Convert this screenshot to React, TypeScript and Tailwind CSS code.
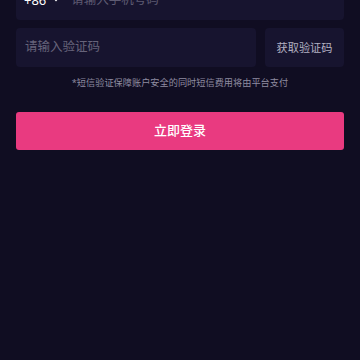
import React from "react";

export default function App() {
  return (
    <div
      className="w-[360px] h-[360px] overflow-hidden bg-[#100d22]"
      style={{ fontFamily: '"Noto Sans", "Noto Sans CJK SC", sans-serif' }}
    >
      <div className="-mt-[20px] px-4 flex flex-col">
        <div className="h-[40px] rounded bg-[#17142f] flex items-center pl-[8px]">
          <span className="text-white text-[13px] leading-none">+86</span>
          <svg width="8" height="6" viewBox="0 0 8 6" className="ml-[6px]">
            <path d="M1 1 L4 4.5 L7 1 Z" fill="#ffffff" />
          </svg>
          <span className="ml-[11px] text-[12.5px] text-[#5e5b72] leading-none">请输入手机号码</span>
        </div>
        <div className="mt-[8px] flex gap-[9px]">
          <div className="h-[39px] flex-1 rounded bg-[#17142f] flex items-center pl-[9px]">
            <span className="text-[12.5px] text-[#66637a] leading-none">请输入验证码</span>
          </div>
          <div className="h-[39px] w-[79px] rounded bg-[#17142f] flex items-center justify-center">
            <span className="text-[11.2px] text-[#b3b1c2] leading-none">获取验证码</span>
          </div>
        </div>
        <div className="mt-[10px] text-center text-[9.2px] text-[#8e8ba0] leading-[12px]">
          *短信验证保障账户安全的同时短信费用将由平台支付
        </div>
        <button className="mt-[23px] h-[38px] w-full rounded-[3px] bg-[#e93a80] text-white text-[13px] font-medium flex items-center justify-center">
          立即登录
        </button>
      </div>
    </div>
  );
}
